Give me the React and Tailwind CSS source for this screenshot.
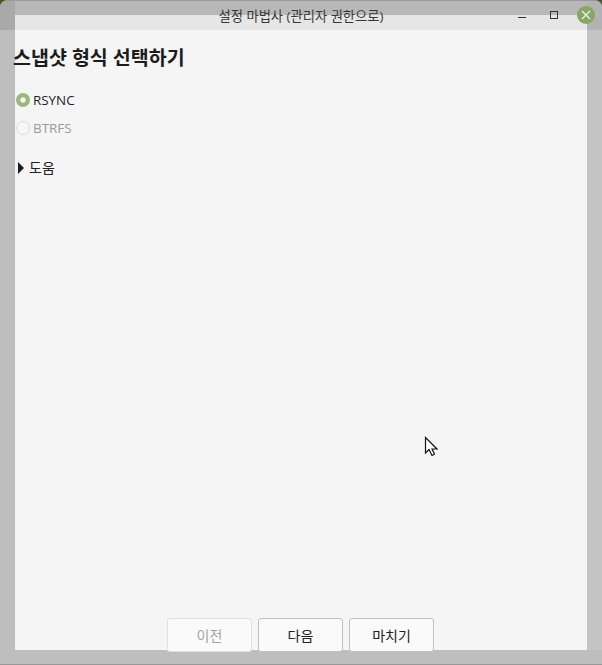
import React from 'react';

const font = { fontFamily: '"Open Sans", "Noto Sans CJK KR", sans-serif' };

function Radio({ label, checked }) {
  return (
    <div className="flex items-center h-[28px] pl-[1px]">
      {checked ? (
        <svg width="14" height="14" viewBox="0 0 14 14">
          <circle cx="7" cy="7" r="7" fill="#9ab87c" />
          <circle cx="7" cy="7" r="2.7" fill="#f5f5f5" />
        </svg>
      ) : (
        <span className="w-[14px] h-[14px] rounded-full border border-[#dcdcdc] bg-[#f7f7f7]"></span>
      )}
      <span className={`ml-[3px] text-[13.4px] ${checked ? 'text-[#1f1f1f]' : 'text-[#9a9a9a]'}`}>{label}</span>
    </div>
  );
}

function Btn({ children, disabled }) {
  return (
    <button className={`w-[85px] h-[34px] pl-[1px] rounded-[3px] border bg-[#fafafa] text-[14px] ${disabled ? 'border-[#e0e0e0] text-[#a8a29e]' : 'border-[#c0c0c0] text-[#222222]'}`}>
      {children}
    </button>
  );
}

export default function App() {
  return (
    <div style={font} className="relative w-[602px] h-[665px] bg-[#3f5a22]">
      <div className="h-full flex flex-col rounded-t-[7px] overflow-hidden border-t border-b border-[#999999] bg-[#bebebe]">
        {/* title bar */}
        <div className="flex h-[29px]">
          <div className="w-[15px] bg-[#a9a9a9]"></div>
          <div className="flex-1 flex flex-col">
            <div className="h-[14px] bg-[#b8b8b8]"></div>
            <div className="h-[15px] bg-[#e6e6e6]"></div>
          </div>
          <div className="w-[15px] bg-[#b3b3b3]"></div>
        </div>

        {/* content */}
        <div className="flex h-[620px]">
          <div className="w-[15px]"></div>
          <div className="flex-1 bg-[#f5f5f5] flex flex-col">
            <h1 className="-ml-[2px] mt-[14px] text-[19.5px] leading-[28px] font-bold text-[#1c1c1c]">스냅샷 형식 선택하기</h1>
            <div className="mt-[14px]">
              <Radio label="RSYNC" checked />
              <Radio label="BTRFS" />
            </div>
            <div className="flex items-center mt-[15px] pl-[3px] text-[14px] text-[#222222]">
              <svg width="6" height="12" viewBox="0 0 6 12" fill="#1c1c1c"><path d="M0 0L6 6L0 12Z" /></svg>
              <span className="ml-[5px]">도움</span>
            </div>
            <div className="relative z-10 mt-auto -mb-[2px] flex justify-center gap-[6px] pr-[2px]">
              <Btn disabled>이전</Btn>
              <Btn>다음</Btn>
              <Btn>마치기</Btn>
            </div>
          </div>
          <div className="w-[15px] bg-[#c4c4c4]"></div>
        </div>
      </div>

      {/* title and window buttons sit over the frame */}
      <div className="absolute top-0 left-0 right-0 h-[30px] flex items-center justify-center pt-[3px] text-[13.3px] text-[#383838]">
        설정 마법사 (관리자 권한으로)
      </div>
      <div className="absolute top-[17px] left-[518px] w-[8px] h-[1px] bg-[#333333]"></div>
      <div className="absolute top-[11px] left-[550px] w-[8px] h-[8px] border border-[#333333]"></div>
      <div className="absolute top-[6px] left-[577px] w-[18px] h-[18px] rounded-full bg-[#88a765] flex items-center justify-center">
        <svg width="10" height="10" viewBox="0 0 10 10" stroke="#f0f0f0" strokeWidth="1.2">
          <path d="M1 1L9 9M9 1L1 9" />
        </svg>
      </div>

      {/* mouse pointer */}
      <svg className="absolute left-[424px] top-[436px]" width="16" height="22" viewBox="0 0 16 22">
        <path d="M1.5 1.5L1.5 17L5 13.5L8 19.5L10.5 18L8 13L13 13Z" fill="#ffffff" stroke="#111111" strokeWidth="1.2" />
      </svg>
    </div>
  );
}
